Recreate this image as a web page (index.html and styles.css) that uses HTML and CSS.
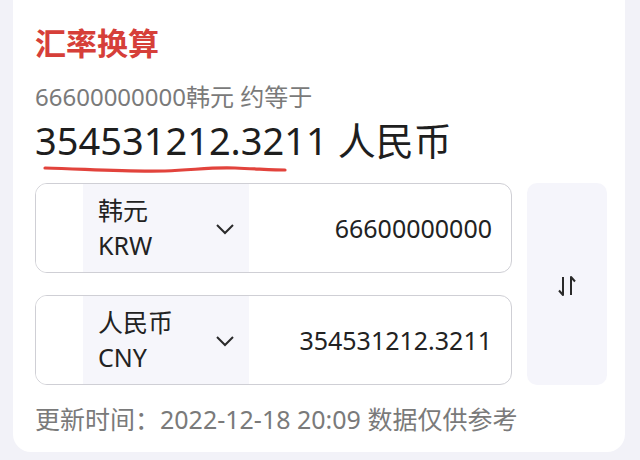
FILE: index.html
```html
<!DOCTYPE html>
<html lang="zh-CN">
<head>
<meta charset="utf-8">
<title>汇率换算</title>
<link rel="stylesheet" href="styles.css">
</head>
<body>
<div class="card">
  <h1 class="title">汇率换算</h1>
  <p class="subtitle">66600000000韩元 约等于</p>
  <p class="result">354531212.3211 人民币</p>
  <svg class="underline" width="260" height="12" viewBox="0 0 260 12">
    <path d="M10 5 C 50 6, 90 9, 130 8 C 160 7, 175 4, 200 5 C 225 6, 240 7, 250 7" fill="none" stroke="#e2433c" stroke-width="3.2" stroke-linecap="round"/>
  </svg>
  <div class="converter">
    <div class="rows">
      <div class="row">
        <div class="flag"></div>
        <div class="select">
          <div class="names">
            <span class="cn">韩元</span>
            <span class="code">KRW</span>
          </div>
          <svg class="chev" width="20" height="12" viewBox="0 0 20 12"><polyline points="2,2 10,10 18,2" fill="none" stroke="#2a2a2a" stroke-width="2"/></svg>
        </div>
        <div class="amount">66600000000</div>
      </div>
      <div class="row">
        <div class="flag"></div>
        <div class="select">
          <div class="names">
            <span class="cn">人民币</span>
            <span class="code">CNY</span>
          </div>
          <svg class="chev" width="20" height="12" viewBox="0 0 20 12"><polyline points="2,2 10,10 18,2" fill="none" stroke="#2a2a2a" stroke-width="2"/></svg>
        </div>
        <div class="amount">354531212.3211</div>
      </div>
    </div>
    <div class="swap">
      <svg width="22" height="20" viewBox="0 0 22 20">
        <path d="M7 1 V19 L3 14.5" fill="none" stroke="#2a2a2a" stroke-width="2" stroke-linejoin="round"/>
        <path d="M15 19 V1 L19 5.5" fill="none" stroke="#2a2a2a" stroke-width="2" stroke-linejoin="round"/>
      </svg>
    </div>
  </div>
  <p class="footer">更新时间：2022-12-18 20:09 数据仅供参考</p>
</div>
</body>
</html>
```
FILE: styles.css
```css
html, body {
  margin: 0;
  padding: 0;
}
body {
  background: #f2f2f8;
  font-family: "Noto Sans", "Noto Sans CJK SC", sans-serif;
  width: 640px;
  height: 460px;
  overflow: hidden;
}
.card {
  margin-left: 13px;
  width: 612px;
  height: 452px;
  box-sizing: border-box;
  background: #ffffff;
  border-radius: 0 0 18px 18px;
  padding: 22px 0 0 22px;
}
.title {
  margin: 0;
  font-size: 31px;
  line-height: 40px;
  font-weight: 700;
  color: #d63f39;
  font-family: "Noto Sans CJK SC", sans-serif;
}
.subtitle {
  margin: 19px 0 0;
  font-size: 24px;
  line-height: 32px;
  color: #7a7a7a;
}
.result {
  margin: 4px 0 0;
  font-size: 38px;
  line-height: 46px;
  color: #1e1e1e;
}
.underline {
  display: block;
  height: 12px;
}
.converter {
  display: flex;
  gap: 15px;
  margin-top: 8px;
}
.rows {
  display: flex;
  flex-direction: column;
  gap: 22px;
  width: 477px;
}
.row {
  display: flex;
  height: 90px;
  box-sizing: border-box;
  border: 1px solid #cfcfd5;
  border-radius: 12px;
  overflow: hidden;
  background: #ffffff;
}
.flag {
  width: 47px;
  background: #ffffff;
}
.select {
  width: 166px;
  background: #f6f6fb;
  display: flex;
  align-items: center;
  padding-left: 15px;
  box-sizing: border-box;
}
.names {
  display: flex;
  flex-direction: column;
  font-size: 25px;
  line-height: 35px;
  color: #222;
  width: 117px;
}
.chev {
  display: block;
  margin-top: 2px;
}
.amount {
  flex: 1;
  display: flex;
  align-items: center;
  justify-content: flex-end;
  padding-right: 19px;
  font-size: 25px;
  color: #222;
}
.swap {
  width: 80px;
  background: #f5f5fb;
  border-radius: 10px;
  display: flex;
  align-items: center;
  justify-content: center;
  padding-top: 4px;
  box-sizing: border-box;
}
.footer {
  margin: 18px 0 0;
  font-size: 25px;
  line-height: 32px;
  color: #7a7a7a;
}
```
